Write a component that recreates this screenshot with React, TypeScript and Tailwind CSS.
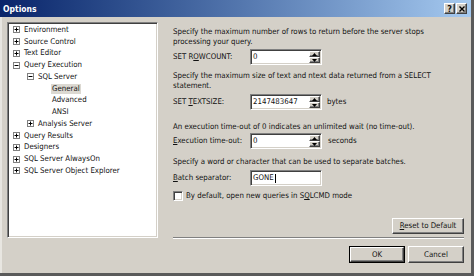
import React from 'react'

// Classic "Options" dialog (SSMS, Query Execution > SQL Server > General)

type Node = { label: string; level: 0 | 1 | 2; exp?: '+' | '-'; selected?: boolean }

const tree: Node[] = [
  { label: 'Environment', level: 0, exp: '+' },
  { label: 'Source Control', level: 0, exp: '+' },
  { label: 'Text Editor', level: 0, exp: '+' },
  { label: 'Query Execution', level: 0, exp: '-' },
  { label: 'SQL Server', level: 1, exp: '-' },
  { label: 'General', level: 2, selected: true },
  { label: 'Advanced', level: 2 },
  { label: 'ANSI', level: 2 },
  { label: 'Analysis Server', level: 1, exp: '+' },
  { label: 'Query Results', level: 0, exp: '+' },
  { label: 'Designers', level: 0, exp: '+' },
  { label: 'SQL Server AlwaysOn', level: 0, exp: '+' },
  { label: 'SQL Server Object Explorer', level: 0, exp: '+' },
]

const indent = ['pl-[5px]', 'pl-[19px]', 'pl-[33px]']

const sunken =
  'border border-t-[#808080] border-l-[#808080] border-b-white border-r-white shadow-[inset_1px_1px_0_#404040,inset_-1px_-1px_0_#d4d0c8]'
const raised =
  'border border-t-white border-l-white border-b-[#404040] border-r-[#404040] shadow-[inset_-1px_-1px_0_#808080]'

function Expander({ kind }: { kind: '+' | '-' }) {
  return (
    <svg width="7" height="7" viewBox="0 0 7 7" className="shrink-0">
      <rect x="0.5" y="0.5" width="6" height="6" fill="white" stroke="#808080" />
      <line x1="1.5" y1="3.5" x2="5.5" y2="3.5" stroke="black" />
      {kind === '+' && <line x1="3.5" y1="1.5" x2="3.5" y2="5.5" stroke="black" />}
    </svg>
  )
}

function SpinField({ value }: { value: string }) {
  return (
    <div className={`flex h-[16px] w-[72px] bg-white ${sunken}`}>
      <div className="flex flex-1 items-center pl-[2px]">{value}</div>
      <div className="mr-[1px] mt-[1px] flex h-[12px] w-[11px] flex-col">
        <div className={`flex h-[6px] items-center justify-center bg-[#d4d0c8] ${raised}`}>
          <svg width="5" height="3" viewBox="0 0 5 3">
            <path d="M2.5 0 L5 3 L0 3 Z" fill="black" />
          </svg>
        </div>
        <div className={`flex h-[6px] items-center justify-center bg-[#d4d0c8] ${raised}`}>
          <svg width="5" height="3" viewBox="0 0 5 3">
            <path d="M0 0 L5 0 L2.5 3 Z" fill="black" />
          </svg>
        </div>
      </div>
    </div>
  )
}

function Button({ children, def, className = '' }: { children: React.ReactNode; def?: boolean; className?: string }) {
  if (def) {
    return (
      <div className={`border border-black ${className}`}>
        <div className={`flex h-full items-center justify-center bg-[#d4d0c8] ${raised}`}>{children}</div>
      </div>
    )
  }
  return <div className={`flex items-center justify-center bg-[#d4d0c8] ${raised} ${className}`}>{children}</div>
}

export default function App() {
  return (
    <div className="h-[276px] w-[474px] overflow-hidden bg-[#d4d0c8] font-['DejaVu_Sans_Condensed','Liberation_Sans',sans-serif] text-[7.8px] leading-[10px] text-[#111]">
      <div className="flex h-[276px] flex-col border-r-[3px] border-b-[3px] border-r-[#5a5a5a] border-b-[#5a5a5a]">
        {/* Title bar */}
        <div className="flex h-[17px] items-center bg-gradient-to-r from-[#0a246a] to-[#a6caf0] pl-[3px] pr-[4px]">
          <span className="text-[8.5px] font-bold text-white">Options</span>
          <div className="ml-auto flex gap-[1px]">
            <div className={`flex h-[11px] w-[11px] items-center justify-center bg-[#d4d0c8] text-[9px] font-bold ${raised}`}>
              ?
            </div>
            <div className={`flex h-[11px] w-[11px] items-center justify-center bg-[#d4d0c8] ${raised}`}>
              <svg width="6" height="6" viewBox="0 0 6 6">
                <path d="M0.5 0.5 L5.5 5.5 M5.5 0.5 L0.5 5.5" stroke="black" strokeWidth="1.4" />
              </svg>
            </div>
          </div>
        </div>

        {/* Body */}
        <div className="flex flex-1 flex-col border-l-2 border-l-[#e8e6e1] pl-[5px] pt-[5px]">
          <div className="flex h-[216px]">
            {/* Tree */}
            <div className={`h-[216px] w-[151px] bg-white ${sunken}`}>
              <div className="pt-[1px]">
                {tree.map((n) => (
                  <div key={n.label} className={`flex h-[11.75px] items-center gap-[4px] ${indent[n.level]}`}>
                    {n.exp ? <Expander kind={n.exp} /> : <span className="w-[7px] shrink-0" />}
                    <span className={n.selected ? 'bg-[#dcd9d2] px-[1px] -ml-[1px]' : ''}>{n.label}</span>
                  </div>
                ))}
              </div>
            </div>

            {/* Page */}
            <div className="ml-[15px] flex w-[291px] flex-col border-b border-b-[#808080] shadow-[0_1px_0_white]">
              <p className="mt-[5px]">
                Specify the maximum number of rows to return before the server stops
                <br />
                processing your query.
              </p>
              <div className="mt-[2px] flex items-center">
                <span className="w-[77px]">
                  SET R<u>O</u>WCOUNT:
                </span>
                <SpinField value="0" />
              </div>
              <p className="mt-[6px]">
                Specify the maximum size of text and ntext data returned from a SELECT
                <br />
                statement.
              </p>
              <div className="mt-[3px] flex items-center">
                <span className="w-[77px]">
                  SET <u>T</u>EXTSIZE:
                </span>
                <SpinField value="2147483647" />
                <span className="ml-[5px]">bytes</span>
              </div>
              <p className="mt-[12px]">An execution time-out of 0 indicates an unlimited wait (no time-out).</p>
              <div className="mt-[1px] flex items-center">
                <span className="w-[77px]">
                  <u>E</u>xecution time-out:
                </span>
                <SpinField value="0" />
                <span className="ml-[6px]">seconds</span>
              </div>
              <p className="mt-[8px]">Specify a word or character that can be used to separate batches.</p>
              <div className="mt-[3px] flex items-center">
                <span className="w-[77px]">
                  <u>B</u>atch separator:
                </span>
                <div className={`flex h-[16px] w-[72px] items-center bg-white pl-[2px] ${sunken}`}>
                  GONE<span className="ml-[1px] h-[9px] w-px bg-black" />
                </div>
              </div>
              <div className="mt-[5px] flex items-center gap-[3px]">
                <div className={`h-[10px] w-[10px] bg-white ${sunken}`} />
                <span>
                  By default, open new queries in S<u>Q</u>LCMD mode
                </span>
              </div>
              <div className="mt-auto mb-[3px] flex justify-end">
                <Button className="h-[16px] w-[72px]">
                  <span>
                    <u>R</u>eset to Default
                  </span>
                </Button>
              </div>
            </div>
          </div>

          {/* Dialog buttons */}
          <div className="mt-[8px] flex justify-end gap-[3px] pr-[7px]">
            <Button def className="h-[17px] w-[56px]">
              OK
            </Button>
            <Button className="h-[17px] w-[56px]">Cancel</Button>
          </div>
        </div>
      </div>
    </div>
  )
}
